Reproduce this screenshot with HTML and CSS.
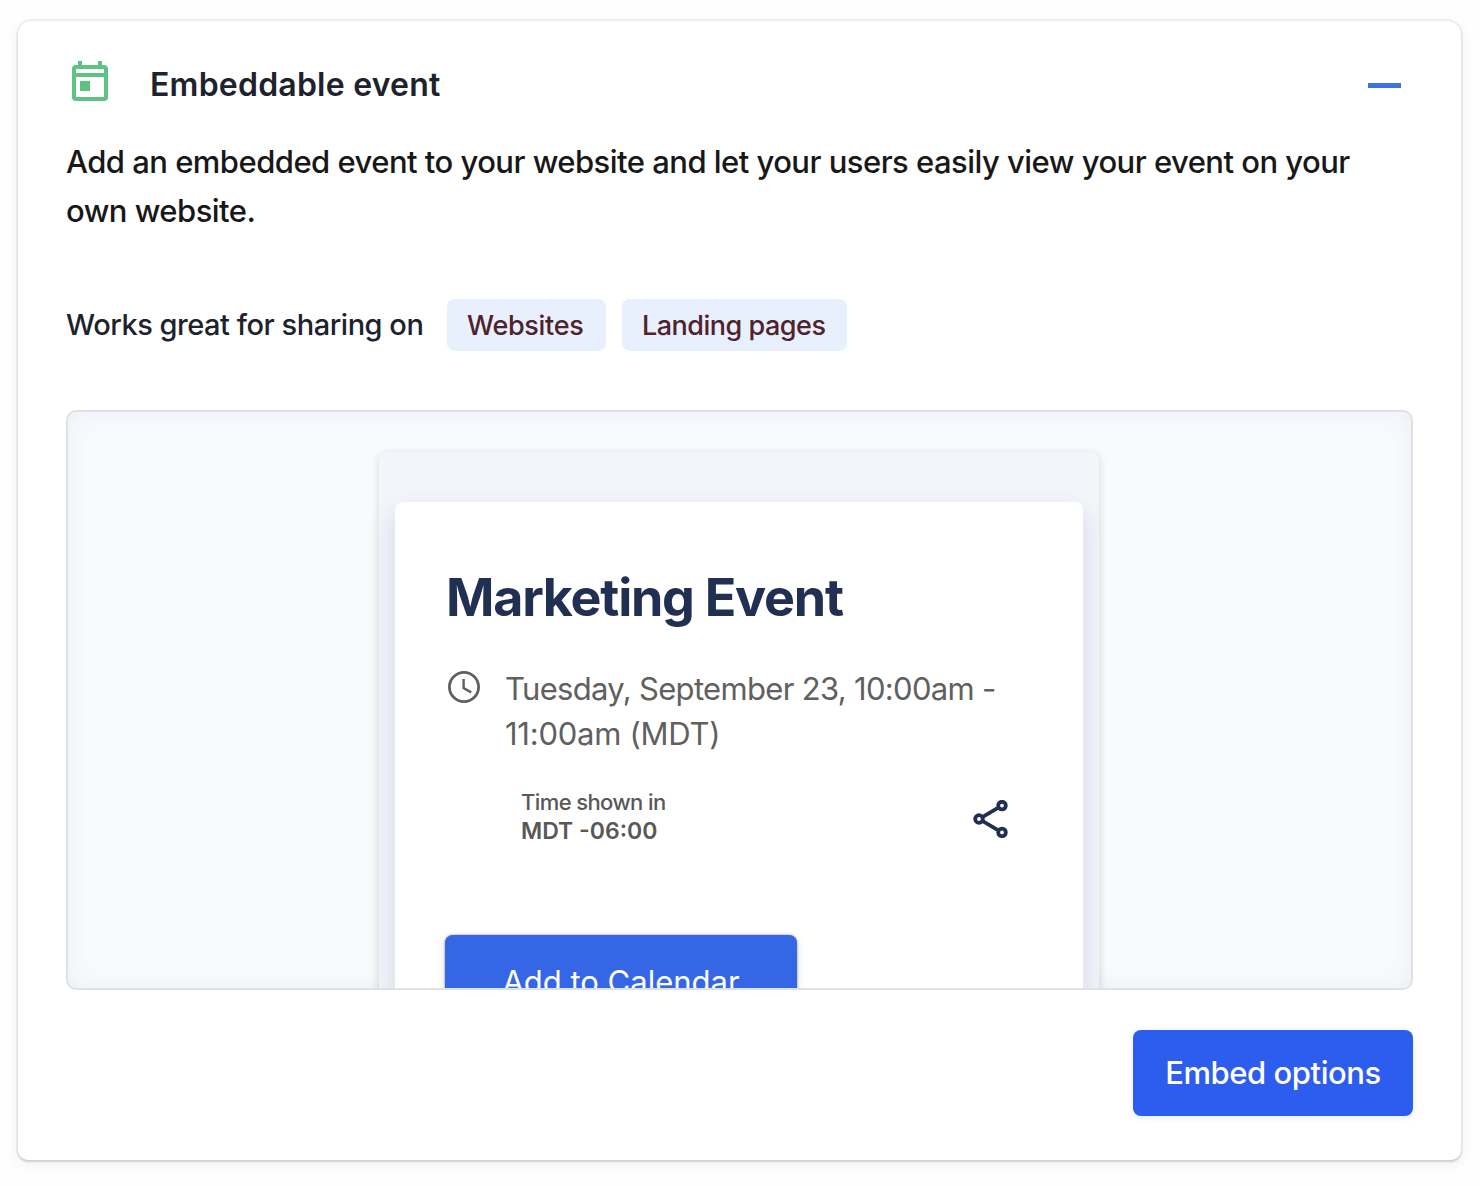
FILE: index.html
```html
<!DOCTYPE html>
<html lang="en">
<head>
    <meta charset="UTF-8">
    <meta name="viewport" content="width=device-width, initial-scale=1.0">
    <title>Embeddable event</title>
    <link rel="stylesheet" href="styles.css">
</head>
<body>
    <div class="share-card">
        <header class="card-header">
            <svg class="calendar-icon" viewBox="0 0 36 40" fill="#5EC283">
                <path fill-rule="evenodd" d="M6 0h4v4h16V0h4v4h2a4 4 0 0 1 4 4v28a4 4 0 0 1-4 4H4a4 4 0 0 1-4-4V8a4 4 0 0 1 4-4h2zM4 8v4h28V8zM4 16v20h28V16z"/>
                <path d="M8 20h10v10H8z"/>
            </svg>
            <h2 class="card-title">Embeddable event</h2>
            <button class="collapse-button" aria-label="Collapse"></button>
        </header>

        <p class="card-description">Add an embedded event to your website and let your users easily view your event on your <span>own website.</span></p>

        <div class="works-row">
            <span class="works-label">Works great for sharing on</span>
            <span class="tag tag-websites">Websites</span>
            <span class="tag tag-landing">Landing pages</span>
        </div>

        <div class="preview">
            <div class="preview-page">
                <div class="event-card">
                    <h1 class="event-title">Marketing Event</h1>

                    <div class="event-date">
                        <svg class="clock-icon" viewBox="0 0 32 32" fill="none" stroke="#606060">
                            <circle cx="16" cy="16" r="14.6" stroke-width="2.8"/>
                            <path d="M15.6 8v9l7.6 4.4" stroke-width="2.4"/>
                        </svg>
                        <div class="event-time"><span class="time-start">Tuesday, September 23, 10:00am -</span><br><span class="time-end">11:00am (MDT)</span></div>
                    </div>

                    <div class="event-meta">
                        <div class="timezone">
                            <div class="timezone-label">Time shown in</div>
                            <div class="timezone-value">MDT -06:00</div>
                        </div>
                        <svg class="share-icon" viewBox="0 0 36 38" fill="none" stroke="#213052" stroke-width="3.8">
                            <path d="M10.2 16.7L24.5 8.2M10.2 21.3l14.3 8.6"/>
                            <circle cx="6" cy="19" r="3.8"/>
                            <circle cx="29" cy="5.6" r="3.8"/>
                            <circle cx="29" cy="32.4" r="3.8"/>
                        </svg>
                    </div>

                    <button class="calendar-button">Add to Calendar</button>
                </div>
            </div>
        </div>

        <div class="card-footer">
            <button class="embed-button">Embed options</button>
        </div>
    </div>
</body>
</html>
```

FILE: styles.css
```css
:root {
    --text-dark: #1D222D;
    --navy: #213052;
    --blue: #2C5DEF;
    --tag-bg: #E8EFFD;
    --tag-text: #4F222C;
    --gray: #606060;
}

* {
    box-sizing: border-box;
    margin: 0;
    padding: 0;
}

body {
    font-family: Inter, 'Liberation Sans', sans-serif;
    background-color: #FEFEFE;
    color: var(--text-dark);
    padding: 21px 19px 0 18px;
    height: 1186px;
    overflow: hidden;
}

button {
    border: none;
    font-family: inherit;
    cursor: pointer;
}

.share-card {
    height: 1139px;
    padding: 40px 48px 0;
    background-color: #FFFFFF;
    border-radius: 14px 14px 10px 10px;
    box-shadow: 0 0 0 2px rgba(30, 30, 70, 0.06), 0 2px 2px rgba(40, 40, 60, 0.12), 0 4px 14px rgba(30, 30, 70, 0.07);
}

.card-header {
    display: flex;
    align-items: center;
    height: 48px;
    padding: 0 12px 0 6px;
}

.calendar-icon {
    width: 36px;
    height: 40px;
    margin-bottom: 8px;
}

.card-title {
    margin-left: 42px;
    font-size: 32px;
    font-weight: 600;
    line-height: 48px;
    letter-spacing: 0.22px;
}

.collapse-button {
    width: 33px;
    height: 5px;
    margin-left: auto;
    background-color: #3B72E4;
}

.card-description {
    margin-top: 28px;
    font-size: 31px;
    font-weight: 500;
    line-height: 49px;
    letter-spacing: -0.53px;
    color: #181818;
    white-space: nowrap;
}

.card-description span {
    display: block;
}

.works-row {
    display: flex;
    align-items: center;
    height: 52px;
    margin-top: 64px;
}

.works-label {
    width: 381px;
    padding-bottom: 2px;
    font-size: 29px;
    font-weight: 500;
    letter-spacing: -0.47px;
    white-space: nowrap;
}

.tag {
    height: 52px;
    padding-left: 20px;
    border-radius: 8px;
    background-color: var(--tag-bg);
    color: var(--tag-text);
    font-size: 27px;
    font-weight: 500;
    line-height: 54px;
    letter-spacing: -0.5px;
    white-space: nowrap;
}

.tag-websites {
    width: 159px;
    margin-right: 16px;
    letter-spacing: -0.3px;
}

.tag-landing {
    width: 225px;
}

.preview {
    height: 580px;
    margin-top: 59px;
    padding: 40px 0 0 311px;
    border: 2px solid #DEE1E6;
    border-radius: 10px;
    background-color: #F9FAFC;
    box-shadow: inset 0 0 24px rgba(40, 50, 110, 0.06);
    overflow: hidden;
}

.preview-page {
    width: 720px;
    height: 700px;
    padding: 50px 16px 0;
    border-radius: 8px;
    background-color: #F2F5FA;
    box-shadow: 0 2px 8px rgba(0, 0, 0, 0.15);
}

.event-card {
    height: 700px;
    padding: 66px 50px 0;
    border-radius: 8px;
    background-color: #FFFFFF;
    box-shadow: 0 12px 26px rgba(33, 40, 62, 0.14);
}

.event-title {
    padding-left: 1px;
    font-size: 52px;
    font-weight: 700;
    line-height: 60px;
    letter-spacing: -1.25px;
    color: var(--navy);
    white-space: nowrap;
}

.event-date {
    display: flex;
    gap: 25px;
    margin-top: 38px;
    padding-left: 3px;
}

.clock-icon {
    flex: none;
    width: 32px;
    height: 32px;
    margin-top: 5px;
}

.event-time {
    font-size: 31px;
    line-height: 45px;
    color: var(--gray);
    white-space: nowrap;
}

.time-start {
    letter-spacing: -0.68px;
}

.time-end {
    letter-spacing: -0.25px;
}

.event-meta {
    display: flex;
    justify-content: space-between;
    margin-top: 32px;
    padding: 0 24px 0 76px;
    color: #585858;
}

.timezone-label {
    font-size: 22px;
    font-weight: 500;
    line-height: 28px;
    letter-spacing: -0.6px;
}

.timezone-value {
    font-size: 23px;
    font-weight: 600;
    line-height: 30px;
}

.share-icon {
    width: 36px;
    height: 38px;
    margin-top: 12px;
}

.calendar-button {
    width: 352px;
    height: 92px;
    margin-top: 89px;
    border-radius: 8px;
    background-color: #3566E6;
    box-shadow: 0 0 2px rgba(0, 0, 0, 0.5), 0 3px 8px rgba(0, 0, 0, 0.15);
    color: #FFFFFF;
    font-size: 31px;
}

.card-footer {
    display: flex;
    justify-content: flex-end;
    margin-top: 40px;
}

.embed-button {
    width: 280px;
    height: 86px;
    padding-bottom: 2px;
    border-radius: 8px;
    background-color: var(--blue);
    box-shadow: 0 2px 6px rgba(44, 93, 239, 0.12);
    color: #FFFFFF;
    font-size: 31px;
    font-weight: 500;
    letter-spacing: -0.45px;
}
```
